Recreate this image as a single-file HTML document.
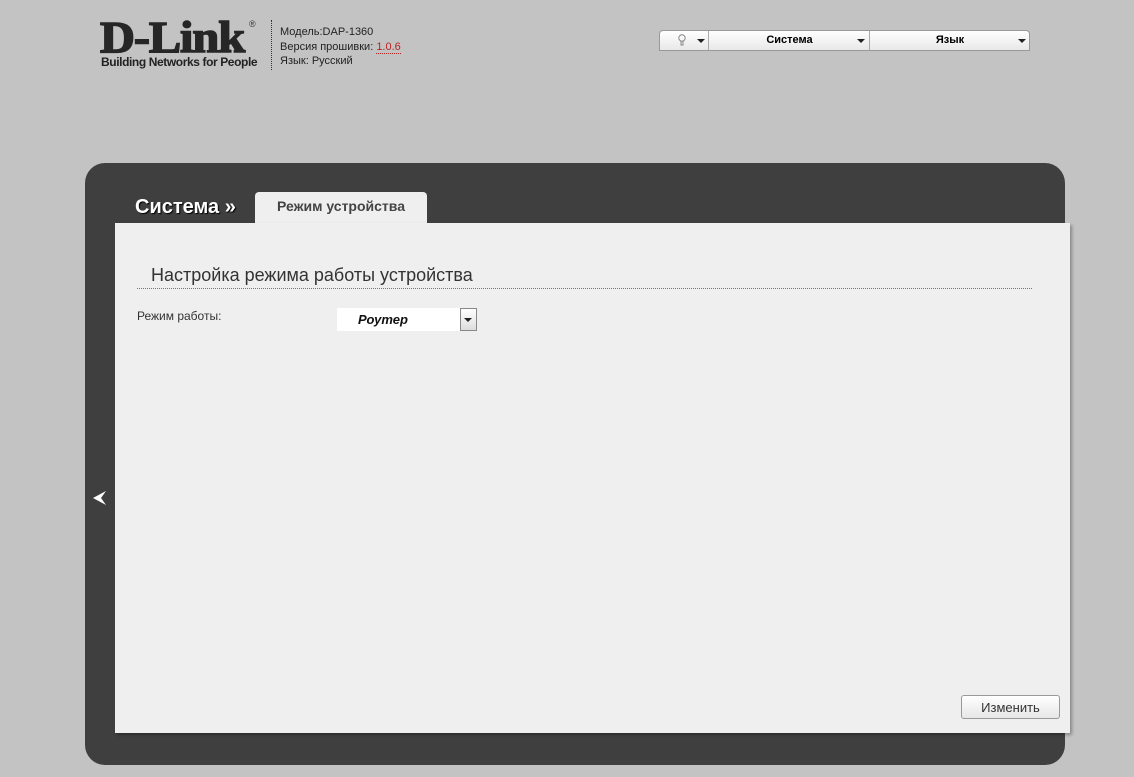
<!DOCTYPE html><html><head><meta charset="utf-8"><style>
body{margin:0;width:1134px;height:777px;background:#c3c3c3;font-family:"Liberation Sans",Arial,sans-serif;position:relative;overflow:hidden}
.abs{position:absolute}
.logo{left:100px;top:16px;font:900 44px/44px "Liberation Serif",serif;color:#262626;letter-spacing:-1px;transform:scaleX(1.1);transform-origin:left;-webkit-text-stroke:1.5px #262626}
.tag{left:101px;top:55px;font:bold 12px "Liberation Sans";color:#222;letter-spacing:-0.4px}
.sep{left:271px;top:20px;height:50px;border-left:1px dotted #333}
.info{left:280px;top:25px;font-size:11px;line-height:14.5px;color:#222}
.nav{left:659px;top:30px;width:371px;height:21px;background:linear-gradient(#fff,#e8e8e8);border:1px solid #999;border-radius:4px 4px 0 0;box-sizing:border-box;font-size:11px;font-weight:bold}
.nav div{position:absolute;top:0;height:19px;line-height:19px;text-align:center;border-left:1px solid #aaa}
.tri{position:absolute;top:8px;width:0;height:0;border-left:4px solid transparent;border-right:4px solid transparent;border-top:4px solid #222}
.panel{left:85px;top:163px;width:980px;height:602px;background:#3f3f3f;border-radius:20px}
.content{left:115px;top:223px;width:955px;height:510px;background:#efefef;box-shadow:2px 2px 3px rgba(0,0,0,.3)}
.tab{left:255px;top:192px;width:172px;height:31px;background:#efefef;border-radius:4px 4px 0 0;font-size:14px;font-weight:bold;color:#444;text-align:center;line-height:28px}
</style></head><body>
<div class="abs logo">D-Link</div>
<div class="abs" style="left:249px;top:19px;font-size:9px;color:#333">®</div>
<div class="abs tag">Building Networks for People</div>
<div class="abs sep"></div>
<div class="abs info">Модель:DAP-1360<br>Версия прошивки: <span style="color:#b22;border-bottom:1px dotted #b22">1.0.6</span><br>Язык: Русский</div>
<div class="abs nav">
<div style="left:0;width:48px;border:none"><svg style="position:absolute;left:18px;top:3px" width="8" height="13"><circle cx="4" cy="4" r="3.2" fill="none" stroke="#888"/><path d="M3 7v4h2V7" fill="none" stroke="#888"/></svg><span class="tri" style="left:37px"></span></div>
<div style="left:48px;width:161px">Система<span class="tri" style="left:148px"></span></div>
<div style="left:209px;width:160px">Язык<span class="tri" style="left:148px"></span></div>
</div>
<div class="abs panel"></div>
<div class="abs" style="left:135px;top:196px;font-size:20px;font-weight:bold;color:#fff;text-shadow:1px 1px 1px #000">Система »</div>
<div class="abs tab">Режим устройства</div>
<div class="abs content"></div>
<svg class="abs" style="left:92px;top:490px" width="16" height="16"><path d="M1 8 L14 1 L9 8 L14 15 Z" fill="#fff"/></svg>
<div class="abs" style="left:151px;top:265px;font-size:18px;color:#333">Настройка режима работы устройства</div>
<div class="abs" style="left:137px;top:288px;width:895px;border-top:1px dotted #777"></div>
<div class="abs" style="left:137px;top:309px;font-size:12px;color:#333">Режим работы:</div>
<div class="abs" style="left:337px;top:308px;width:123px;height:23px;background:#fff;font:italic bold 13px/24px 'Liberation Sans';padding-left:21px;box-sizing:border-box;color:#111">Роутер</div>
<div class="abs" style="left:460px;top:308px;width:17px;height:23px;background:linear-gradient(#fff,#ddd);border:1px solid #888;box-sizing:border-box"><span class="tri" style="left:3px;top:9px"></span></div>
<div class="abs" style="left:961px;top:695px;width:99px;height:24px;border:1px solid #999;border-radius:3px;background:linear-gradient(#fff,#e6e6e6);box-sizing:border-box;text-align:center;line-height:23px;font-size:13px;color:#333">Изменить</div>
</body></html>
